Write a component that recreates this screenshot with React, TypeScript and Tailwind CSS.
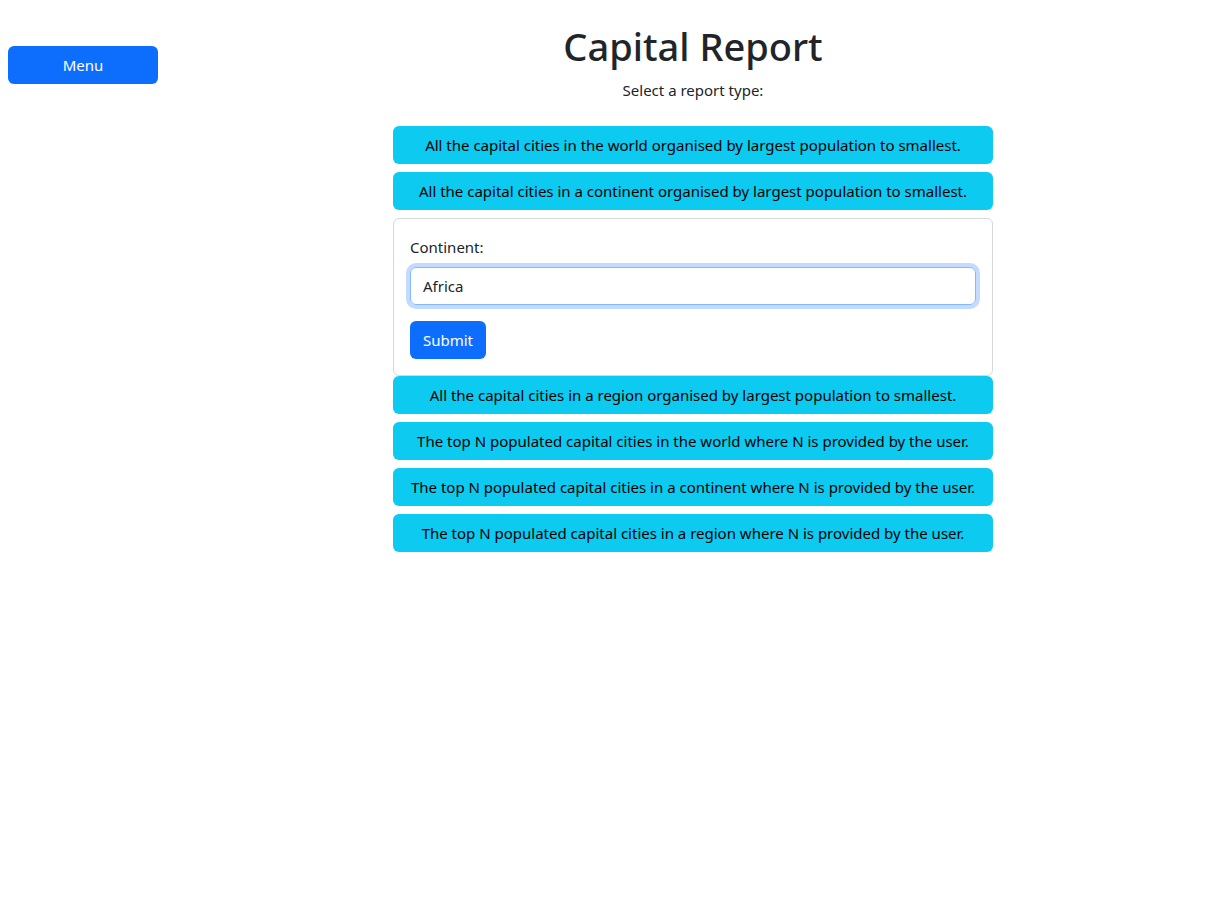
const reports = [
  "All the capital cities in the world organised by largest population to smallest.",
  "All the capital cities in a continent organised by largest population to smallest.",
];

const moreReports = [
  "All the capital cities in a region organised by largest population to smallest.",
  "The top N populated capital cities in the world where N is provided by the user.",
  "The top N populated capital cities in a continent where N is provided by the user.",
  "The top N populated capital cities in a region where N is provided by the user.",
];

const ReportButton = ({ label }: { label: string }) => (
  <button className="w-full h-[38px] rounded-md bg-[#0dcaf0] text-black text-[15px] px-3 text-center whitespace-nowrap">
    {label}
  </button>
);

const App = () => {
  return (
    <div className="flex min-h-[917px] bg-white text-[#212529] font-['Noto_Sans',sans-serif] text-[15px]">
      <aside className="w-[174px] shrink-0 pt-[46px] pl-2">
        <button className="w-[150px] h-[38px] rounded-md bg-[#0d6efd] text-white text-[15px]">
          Menu
        </button>
      </aside>

      <main className="flex-1 flex flex-col items-center pt-[22px]">
        <h1 className="text-[38px] leading-[48px] font-medium mb-2">Capital Report</h1>
        <p className="text-[15px] leading-6 mb-6">Select a report type:</p>

        <div className="w-[600px] flex flex-col">
          <div className="flex flex-col gap-2">
            {reports.map((r, i) => (
              <ReportButton key={i} label={r} />
            ))}
          </div>

          <div className="mt-2 border border-[#d6d9dc] rounded-md p-4">
            <label className="block text-[15px] leading-6 mb-2">Continent:</label>
            <input
              defaultValue="Africa"
              className="block w-full h-[38px] rounded-md border border-[#86b7fe] px-3 text-[15px] text-[#212529] outline-none ring-4 ring-[#0d6efd]/25"
            />
            <button className="mt-4 h-[38px] w-[76px] rounded-md bg-[#0d6efd] text-white text-[15px]">
              Submit
            </button>
          </div>

          <div className="flex flex-col gap-2">
            {moreReports.map((r, i) => (
              <ReportButton key={i} label={r} />
            ))}
          </div>
        </div>
      </main>
    </div>
  );
};

export default App;
